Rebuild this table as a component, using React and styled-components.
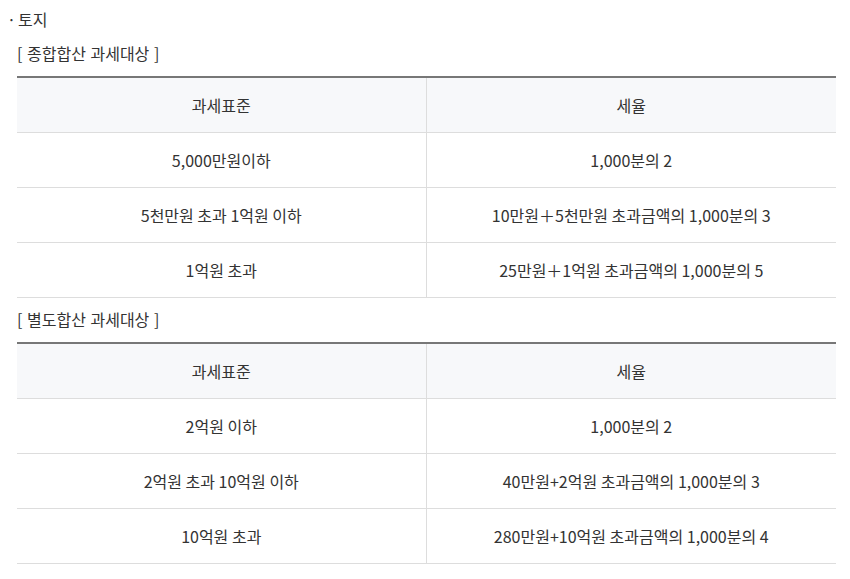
import React from "react";
import styled, { createGlobalStyle } from "styled-components";

const Global = createGlobalStyle`
  html, body { margin: 0; padding: 0; background: #fff; }
  body {
    font-family: "Noto Sans CJK KR", "Noto Sans", sans-serif;
    color: #333;
    font-size: 16px;
  }
`;

const Page = styled.div`
  padding: 8px 14px 0 7px;
`;

const Heading = styled.div`
  line-height: 22px;
  height: 22px;
  display: flex;
  &::before {
    content: "·";
    width: 11px;
  }
`;

const Section = styled.div`
  padding-left: 10px;
`;

const SubTitle = styled.div`
  line-height: 22px;
  word-spacing: 1px;
  margin: ${(p) => (p.$first ? "12px" : "10px")} 0 12px;
`;

const Table = styled.table`
  width: 100%;
  border-collapse: collapse;
  table-layout: fixed;
  border-top: 2px solid #777;
  text-align: center;
`;

const Th = styled.th`
  font-weight: 400;
  height: 54px;
  padding: 0;
  background: #f7f8fa;
  border-bottom: 1px solid #ddd;
  & + & { border-left: 1px solid #ddd; }
`;

const Td = styled.td`
  height: 54px;
  padding: 0;
  border-bottom: 1px solid #ddd;
  & + & { border-left: 1px solid #ddd; }
`;

const tables = [
  {
    title: "[ 종합합산 과세대상 ]",
    rows: [
      ["5,000만원이하", "1,000분의 2"],
      ["5천만원 초과 1억원 이하", "10만원＋5천만원 초과금액의 1,000분의 3"],
      ["1억원 초과", "25만원＋1억원 초과금액의 1,000분의 5"],
    ],
  },
  {
    title: "[ 별도합산 과세대상 ]",
    rows: [
      ["2억원 이하", "1,000분의 2"],
      ["2억원 초과 10억원 이하", "40만원+2억원 초과금액의 1,000분의 3"],
      ["10억원 초과", "280만원+10억원 초과금액의 1,000분의 4"],
    ],
  },
];

export default function App() {
  return (
    <>
      <Global />
      <Page>
        <Heading>토지</Heading>
        <Section>
          {tables.map((t, i) => (
            <React.Fragment key={t.title}>
              <SubTitle $first={i === 0}>{t.title}</SubTitle>
              <Table>
                <colgroup>
                  <col style={{ width: "409px" }} />
                  <col />
                </colgroup>
                <thead>
                  <tr>
                    <Th>과세표준</Th>
                    <Th>세율</Th>
                  </tr>
                </thead>
                <tbody>
                  {t.rows.map((r) => (
                    <tr key={r[0]}>
                      <Td>{r[0]}</Td>
                      <Td>{r[1]}</Td>
                    </tr>
                  ))}
                </tbody>
              </Table>
            </React.Fragment>
          ))}
        </Section>
      </Page>
    </>
  );
}
